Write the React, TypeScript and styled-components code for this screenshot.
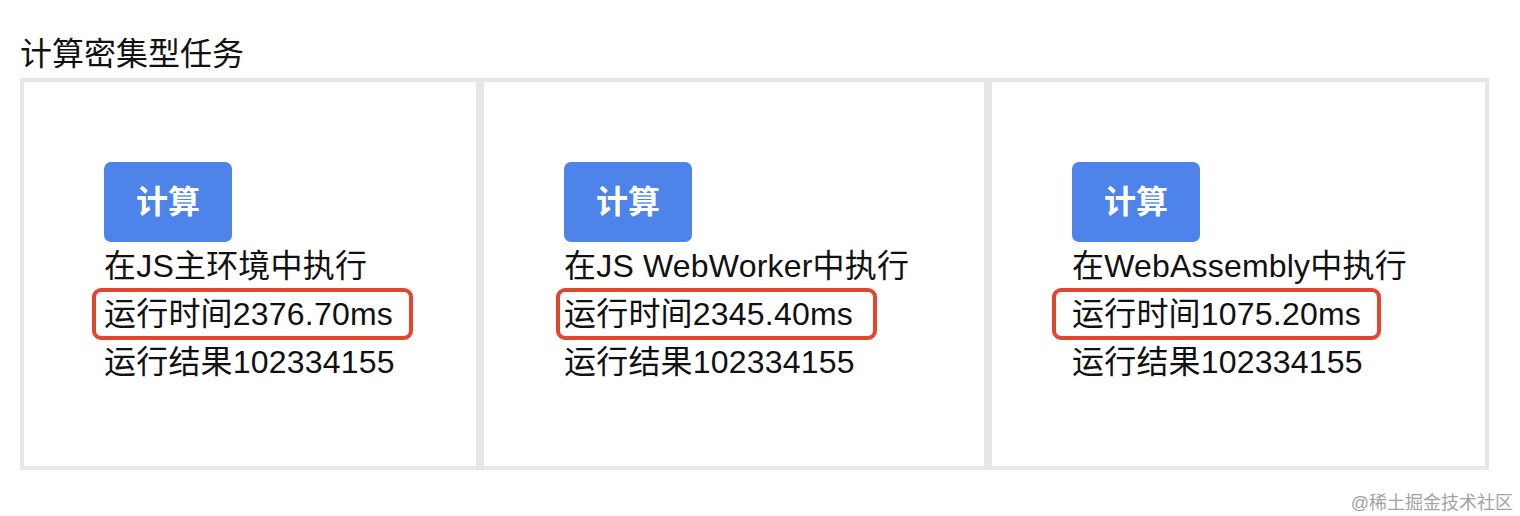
import React from "react";
import styled, { createGlobalStyle } from "styled-components";

const GlobalStyle = createGlobalStyle`
  html, body {
    margin: 0;
    padding: 0;
    background: #ffffff;
  }
  body {
    font-family: "Liberation Sans", "Noto Sans CJK SC", sans-serif;
    color: #111111;
  }
`;

const Page = styled.div`
  position: relative;
  width: 1520px;
  height: 516px;
  padding: 30px 0 0 20px;
  box-sizing: border-box;
  overflow: hidden;
`;

const Title = styled.h2`
  margin: 0;
  font-size: 32px;
  font-weight: 400;
  line-height: 48px;
`;

const Board = styled.div`
  display: inline-flex;
  gap: 8px;
  padding: 4px;
  background: #e6e7e9;
`;

const Card = styled.div<{ $width: number }>`
  width: ${(p) => p.$width}px;
  box-sizing: border-box;
  padding: 80px 0 80px 80px;
  background: #ffffff;
  display: flex;
  flex-direction: column;
  align-items: flex-start;
`;

const RunButton = styled.button`
  border: none;
  border-radius: 7px;
  background: #4e83ea;
  color: #ffffff;
  font-family: inherit;
  font-size: 32px;
  font-weight: 700;
  line-height: 48px;
  padding: 16px 32px;
  cursor: pointer;
`;

const Line = styled.div`
  position: relative;
  font-size: 32px;
  line-height: 48px;
  letter-spacing: 0.2px;
  white-space: nowrap;
`;

const Marker = styled.span<{ $left: number; $right: number }>`
  position: absolute;
  top: -2px;
  bottom: -2px;
  left: -${(p) => p.$left}px;
  right: -${(p) => p.$right}px;
  border: 4px solid #e2462d;
  border-radius: 9px;
  pointer-events: none;
`;

const Watermark = styled.div`
  position: absolute;
  right: 7px;
  bottom: 3px;
  font-size: 18px;
  line-height: 20px;
  color: #a3a3a3;
`;

type Task = {
  width: number;
  env: string;
  time: string;
  result: string;
  boxLeft: number;
  boxRight: number;
};

const tasks: Task[] = [
  { width: 452, env: "在JS主环境中执行", time: "2376.70", result: "102334155", boxLeft: 12, boxRight: 20 },
  { width: 500, env: "在JS WebWorker中执行", time: "2345.40", result: "102334155", boxLeft: 8, boxRight: 24 },
  { width: 493, env: "在WebAssembly中执行", time: "1075.20", result: "102334155", boxLeft: 20, boxRight: 20 },
];

export default function App() {
  return (
    <>
      <GlobalStyle />
      <Page>
        <Title>计算密集型任务</Title>
        <Board>
          {tasks.map((t) => (
            <Card key={t.env} $width={t.width}>
              <RunButton>计算</RunButton>
              <Line>{t.env}</Line>
              <Line>
                运行时间{t.time}ms
                <Marker $left={t.boxLeft} $right={t.boxRight} />
              </Line>
              <Line>运行结果{t.result}</Line>
            </Card>
          ))}
        </Board>
        <Watermark>@稀土掘金技术社区</Watermark>
      </Page>
    </>
  );
}
